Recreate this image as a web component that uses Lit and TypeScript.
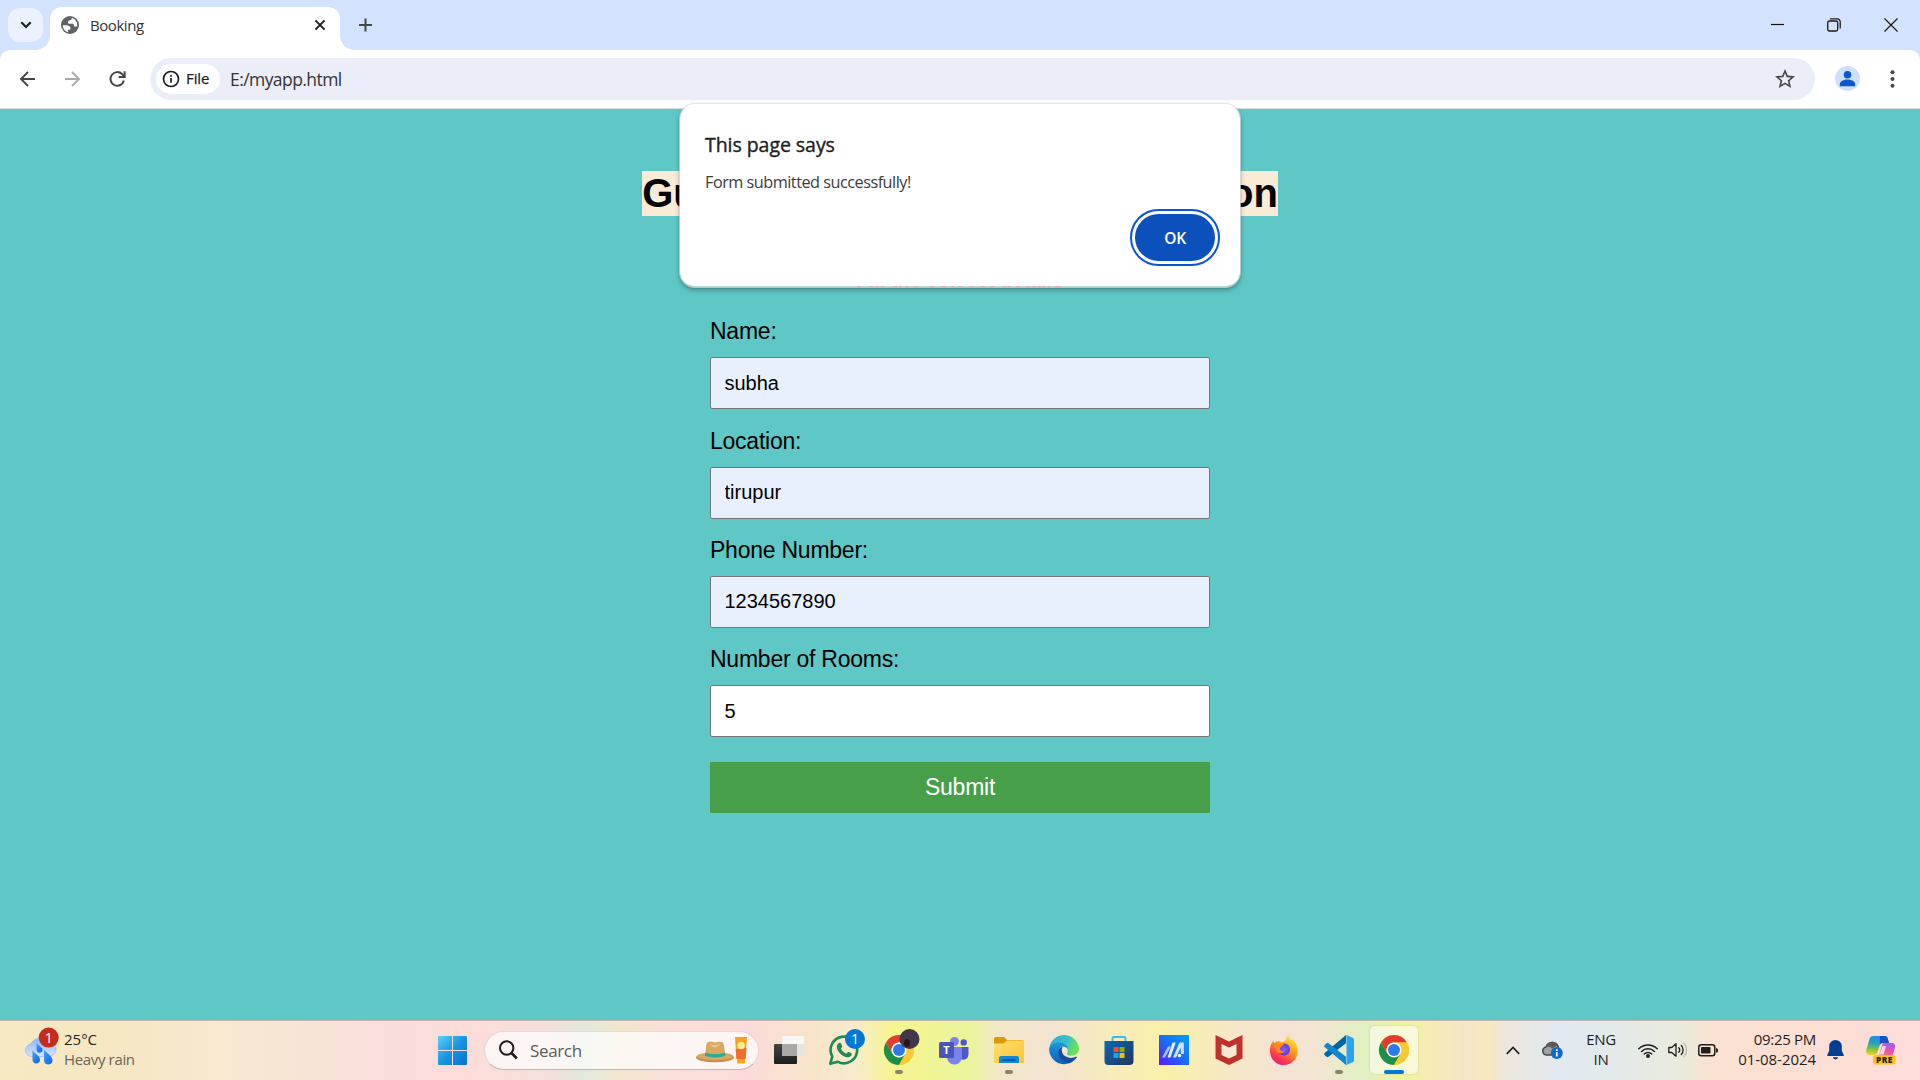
import { LitElement, html, css, svg } from "lit";
import { customElement } from "lit/decorators.js";

interface Field {
  label: string;
  value: string;
  filled: boolean;
}

const FIELDS: Field[] = [
  { label: "Name:", value: "subha", filled: true },
  { label: "Location:", value: "tirupur", filled: true },
  { label: "Phone Number:", value: "1234567890", filled: true },
  { label: "Number of Rooms:", value: "5", filled: false },
];

@customElement("browser-chrome")
class BrowserChrome extends LitElement {
  static styles = css`
    :host {
      display: block;
      background: #d3e3fd;
      font-family: "Open Sans", "Noto Sans", sans-serif;
      color: #1f1f1f;
    }
    svg {
      display: block;
    }
    .tabs {
      display: flex;
      height: 50px;
      box-sizing: border-box;
      padding-left: 8px;
    }
    .tab-search {
      width: 35px;
      height: 34px;
      margin: 8px 7px 0 0;
      border-radius: 12px;
      background: #ebf2fe;
      display: flex;
      align-items: center;
      justify-content: center;
    }
    .tab {
      position: relative;
      display: flex;
      align-items: center;
      width: 290px;
      height: 43px;
      margin: 7px 1px 0 0;
      box-sizing: border-box;
      padding: 0 13px 7px 11px;
      border-radius: 12px 12px 0 0;
      background: #fff;
    }
    .tab::before,
    .tab::after {
      content: "";
      position: absolute;
      bottom: 0;
      width: 14px;
      height: 14px;
    }
    .tab::before {
      left: -14px;
      background: radial-gradient(circle at 0 0, transparent 13.5px, #fff 14px);
    }
    .tab::after {
      right: -14px;
      background: radial-gradient(circle at 100% 0, transparent 13.5px, #fff 14px);
    }
    .tab-title {
      flex: 1;
      margin-left: 11px;
      font-size: 15px;
      line-height: 20px;
      letter-spacing: -0.45px;
      color: #333;
    }
    .plus {
      margin: 18px 0 0 18px;
    }
    .controls {
      margin-left: auto;
      display: flex;
      gap: 43px;
      padding: 18px 22px 0 0;
    }
    .toolbar {
      display: flex;
      align-items: center;
      height: 59px;
      box-sizing: border-box;
      padding: 0 25px 1px 17px;
      border-bottom: 1px solid #dcdfe0;
      border-radius: 10px 10px 0 0;
      background: #fff;
    }
    .nav {
      display: flex;
      gap: 22px;
      width: 133px;
    }
    .omnibox {
      flex: 1;
      display: flex;
      align-items: center;
      height: 42px;
      box-sizing: border-box;
      padding: 0 20px 0 6px;
      border-radius: 21px;
      background: #ebeef8;
    }
    .chip {
      display: flex;
      align-items: center;
      gap: 6px;
      width: 64px;
      height: 30px;
      box-sizing: border-box;
      padding-left: 6px;
      border-radius: 15px;
      background: #fff;
      font-size: 15px;
      font-weight: 500;
      letter-spacing: -0.1px;
    }
    .chip span {
      padding-bottom: 1px;
      -webkit-text-stroke: 0.25px #1f1f1f;
    }
    .url {
      flex: 1;
      margin-left: 10px;
      font-size: 17.5px;
      letter-spacing: -0.57px;
      color: #333;
    }
    .avatar {
      margin: 0 30px 0 20px;
    }
  `;

  render() {
    return html`
      <div class="tabs">
        <div class="tab-search">
          <svg width="12" height="8" viewBox="0 0 12 8" fill="none" stroke="#1f1f1f" stroke-width="2.2">
            <path d="M1.3 1.3 6 6l4.7-4.7" />
          </svg>
        </div>
        <div class="tab">
          <svg width="18" height="18" viewBox="0 0 18 18">
            <circle cx="9" cy="9" r="9" fill="#5f6368" />
            <path
              fill="#fff"
              d="M1.800 9.300h3.400c2.800 0 4.300 1.300 4.300 3.300 0 .8-.6 1.200-1.500 1.200H7v2.400C4 15.500 1.800 12.700 1.800 9.300zM10.800 2c.1 1.200-.6 2-1.800 2.300-1.500.4-2.300 1.300-2 2.500.2.700.8 1 2 1h2.500c.8 0 1.200.4 1.300 1.200.1 1 .7 1.600 1.600 1.600h1.700c-.4 1.800.2-.2.100-1.600C16.200 5.500 13.900 2.700 10.800 2z"
            />
            <path d="M10.500 4.800 13.300 4l2 2.500.4 2.500h-2.200l-1-2.200h-3z" fill="#fff" />
          </svg>
          <span class="tab-title">Booking</span>
          <svg width="14" height="14" viewBox="0 0 14 14" stroke="#1f1f1f" stroke-width="2">
            <path d="M2.400 2.400l9.200 9.200M11.600 2.400 2.400 11.600" />
          </svg>
        </div>
        <svg class="plus" width="13" height="14" viewBox="0 0 13 14" stroke="#454746" stroke-width="2">
          <path d="M0 7h13M6.500 .5v13" />
        </svg>
        <div class="controls">
          <svg width="13" height="14" viewBox="0 0 13 14" stroke="#111" stroke-width="1.200">
            <path d="M0 6.500h13" />
          </svg>
          <svg width="14" height="14" viewBox="0 0 14 14" fill="none" stroke="#1b1b1b" stroke-width="1.300">
            <rect x=".7" y="3" width="10" height="10" rx="1.800" />
            <path d="M3 .8h7.200a3 3 0 0 1 3 3V10.500" />
          </svg>
          <svg width="14" height="14" viewBox="0 0 14 14" stroke="#1b1b1b" stroke-width="1.200">
            <path d="M.5.500l13 13M13.500.500l-13 13" />
          </svg>
        </div>
      </div>
      <div class="toolbar">
        <div class="nav">
          <svg width="22" height="22" viewBox="0 0 22 22" fill="none" stroke="#444746" stroke-width="1.900">
            <path d="M18 11H4.500M11 4l-7 7 7 7" />
          </svg>
          <svg width="22" height="22" viewBox="0 0 22 22" fill="none" stroke="#aaacab" stroke-width="1.900">
            <path d="M4 11h13.500M11 4l7 7-7 7" />
          </svg>
          <svg width="24" height="22" viewBox="0 0 24 22" fill="none" stroke="#444746" stroke-width="2">
            <path d="M18.900 12.500a6.800 6.800 0 1 1-1.700-6.300l2 2.200" />
            <path d="M19.600 3.200v5.800h-5.900" />
          </svg>
        </div>
        <div class="omnibox">
          <div class="chip">
            <svg width="18" height="18" viewBox="0 0 18 18" fill="none" stroke="#1f1f1f" stroke-width="1.700">
              <circle cx="9" cy="9" r="7.500" />
              <path d="M9 8v4.800M9 5v1.800" />
            </svg>
            <span>File</span>
          </div>
          <span class="url">E:/myapp.html</span>
          <svg width="20" height="20" viewBox="2 2 20 20" fill="#444746">
            <path
              d="M22 9.240l-7.190-.62L12 2 9.190 8.630 2 9.240l5.460 4.730L5.820 21 12 17.270 18.180 21l-1.630-7.030L22 9.240zM12 15.400l-3.760 2.270 1-4.280-3.320-2.880 4.380-.38L12 6.100l1.710 4.040 4.380.38-3.320 2.880 1 4.280L12 15.400z"
            />
          </svg>
        </div>
        <svg class="avatar" width="25" height="25" viewBox="0 0 25 25">
          <circle cx="12.500" cy="12.500" r="12.500" fill="#cfe0fc" />
          <circle cx="12.500" cy="8.800" r="3.800" fill="#0b57d0" />
          <path d="M4.800 20.200v-2c0-3 4-4.700 7.700-4.700s7.700 1.700 7.700 4.700v2z" fill="#0b57d0" />
        </svg>
        <svg width="5" height="18" viewBox="0 0 5 18" fill="#444746">
          <circle cx="2.500" cy="2.200" r="2" />
          <circle cx="2.500" cy="9" r="2" />
          <circle cx="2.500" cy="15.800" r="2" />
        </svg>
      </div>
    `;
  }
}

@customElement("booking-page")
class BookingPage extends LitElement {
  static styles = css`
    :host {
      display: flex;
      flex-direction: column;
      align-items: center;
      height: 911px;
      background: #5fc7c6;
      font-family: "Liberation Sans", Arial, sans-serif;
      color: #000;
    }
    h1 {
      width: 636px;
      height: 45px;
      margin: 62px 0 0;
      background: #faebd7;
      font-size: 40px;
      line-height: 45px;
      letter-spacing: -0.02px;
      text-align: center;
      white-space: nowrap;
    }
    h2 {
      margin: 53px 0 0;
      font-size: 20px;
      line-height: 23px;
      color: crimson;
    }
    form {
      display: flex;
      flex-direction: column;
      width: 500px;
      margin-top: 26.2px;
    }
    label {
      font-size: 23px;
      line-height: 26px;
      letter-spacing: -0.24px;
      margin-bottom: 13px;
    }
    .entry {
      height: 52px;
      box-sizing: border-box;
      padding: 0 13.5px;
      margin-bottom: 18.4px;
      border: 1px solid #767676;
      border-radius: 2px;
      background: #fff;
      font: 20px/48px "Liberation Sans", Arial, sans-serif;
      color: #000;
      outline: none;
    }
    .filled {
      background: #e8f0fe;
    }
    button {
      height: 51px;
      margin-top: 6.3px;
      padding: 0;
      border: 0;
      background: #47a049;
      color: #fff;
      font: 23px "Liberation Sans", Arial, sans-serif;
      letter-spacing: -0.24px;
    }
  `;

  render() {
    return html`
      <h1>Guest Room Booking Application</h1>
      <h2>Fill the correct details</h2>
      <form>
        ${FIELDS.map(
          (f) => html`<label>${f.label}</label>
            <input class="entry ${f.filled ? "filled" : ""}" .value=${f.value} />`
        )}
        <button type="button">Submit</button>
      </form>
    `;
  }
}

@customElement("alert-dialog")
class AlertDialog extends LitElement {
  static styles = css`
    :host {
      position: absolute;
      left: 679px;
      top: 103px;
      width: 562px;
      height: 185px;
      box-sizing: border-box;
      padding: 28px 25px 24px 25px;
      display: flex;
      flex-direction: column;
      border: 1px solid rgba(226, 226, 226, 0.7);
      border-bottom-width: 2px;
      border-radius: 16px;
      background: #fff;
      background-clip: padding-box;
      box-shadow: 0 3px 5px rgba(0, 0, 0, 0.2), 0 1px 2px rgba(0, 0, 0, 0.14);
      font-family: "Open Sans", "Noto Sans", sans-serif;
      color: #1f1f1f;
    }
    .title {
      font-size: 19.500px;
      line-height: 26px;
      font-weight: 500;
      letter-spacing: -0.05px;
      -webkit-text-stroke: 0.4px #1f1f1f;
    }
    .message {
      margin-top: 13px;
      font-size: 16.250px;
      line-height: 22px;
      letter-spacing: -0.5px;
      color: #3c3c3c;
    }
    .ok {
      align-self: flex-end;
      margin-top: 21px;
      width: 80px;
      height: 47px;
      border-radius: 24px;
      background: #0c50bc;
      outline: 2px solid #0b57d0;
      outline-offset: 3px;
      color: #fff;
      font-size: 15.500px;
      line-height: 48px;
      font-weight: 600;
      letter-spacing: -0.2px;
      text-align: center;
    }
  `;

  render() {
    return html`
      <div class="title">This page says</div>
      <div class="message">Form submitted successfully!</div>
      <div class="ok">OK</div>
    `;
  }
}

const chromeLogo = svg`
  <circle cx="15" cy="15" r="15" fill="#fbc934" />
  <path d="M2 7.500A15 15 0 0 0 15 30l6.500-11.250L15 15 8.500 18.750z" fill="#1c9048" />
  <path d="M2 7.500A15 15 0 0 1 28 7.500H15A7.500 7.500 0 0 0 8.500 18.750z" fill="#e33b2e" />
  <path d="M28 7.500A15 15 0 0 1 15 30l6.500-11.250A7.500 7.500 0 0 0 15 7.500z" fill="#fbc934" />
  <circle cx="15" cy="15" r="7.500" fill="#fff" />
  <circle cx="15" cy="15" r="6" fill="#3079ea" />`;

const ICONS = {
  taskView: svg`
    <defs><linearGradient id="tv" x1="0" y1="0" x2="0" y2="1"><stop offset="0" stop-color="#454542"/><stop offset="1" stop-color="#1d1d1c"/></linearGradient></defs>
    <rect x="0" y="9" width="23" height="20" rx="1" fill="url(#tv)" />
    <rect x="8" y="1" width="22" height="20" rx="1" fill="#f7f7f5" />
    <path d="M8 9h15v12H9a1 1 0 0 1-1-1z" fill="#a9a8a5" />
    <path d="M23 9h7v11a1 1 0 0 1-1 1h-6z" fill="#e6e5e2" />`,
  whatsapp: svg`
    <path d="M1.300 28.700l2-7.200A13.300 13.300 0 1 1 8.600 26.700z" fill="none" stroke="#1e8a55" stroke-width="2.600" stroke-linejoin="round" />
    <path d="M9.200 8.600c1-1.300 2.300-1.200 2.800-.2l1.200 2.700c.2.600-.2 1.200-1.300 2.500 1.200 2.400 2.800 4 5.300 5.100 1.400-1.700 1.800-2 2.500-1.700l2.700 1.300c.7.500.2 2.200-.6 3-1.800 1.600-4.700 1.200-7.600-.4-3-1.800-5-4.300-6-7-.7-2.200-.2-4 1-5.300z" fill="#1e8a55" />
    <circle cx="26" cy="4" r="10" fill="#0078d4" />
    <text x="26" y="9" text-anchor="middle" font-size="14" fill="#fff">1</text>`,
  chromeProfile: svg`${chromeLogo}
    <circle cx="25.500" cy="4" r="10" fill="#40384a" />
    <ellipse cx="23" cy="8" rx="3" ry="4" fill="#2a1518" />`,
  teams: svg`
    <circle cx="15.500" cy="6.500" r="4.500" fill="#7b83eb" />
    <circle cx="24.700" cy="7.400" r="3.200" fill="#5059c9" />
    <path d="M19 12h10.500v7.500a5 5 0 0 1-7.500 4.500z" fill="#5059c9" />
    <path d="M8 12h15v9a7.500 7.500 0 0 1-15 2z" fill="#7b83eb" />
    <rect x="0" y="7" width="15" height="16" rx="1.500" fill="#4b53bc" />
    <text x="7.500" y="19" text-anchor="middle" font-size="11" font-weight="700" fill="#fff">T</text>`,
  folder: svg`
    <defs><linearGradient id="fo" x1="0" y1="0" x2="1" y2="1"><stop offset="0" stop-color="#ffdf72"/><stop offset="1" stop-color="#fdc22d"/></linearGradient></defs>
    <path d="M0 4a2 2 0 0 1 2-2h8l3 3h15a2 2 0 0 1 2 2v7H0z" fill="#dc9a08" />
    <path d="M0 8.500h9.500L13 5.500h16a1 1 0 0 1 1 1V27a1 1 0 0 1-1 1H1a1 1 0 0 1-1-1z" fill="url(#fo)" />
    <path d="M5 28v-5a2 2 0 0 1 2-2h16a2 2 0 0 1 2 2v5z" fill="#1585d8" />
    <path d="M8.500 25h13" stroke="#0c5594" stroke-width="1.600" />`,
  edge: svg`
    <defs>
      <linearGradient id="ea" x1="0" y1="0" x2="1" y2=".3"><stop offset="0" stop-color="#2aa5e4"/><stop offset=".6" stop-color="#35c3c8"/><stop offset="1" stop-color="#6de05a"/></linearGradient>
      <linearGradient id="eb" x1="0" y1="0" x2="0" y2="1"><stop offset="0" stop-color="#1c97dd"/><stop offset="1" stop-color="#0b5fb8"/></linearGradient>
    </defs>
    <path d="M.3 13A15 15 0 0 1 30 13c.3 5-3 7.600-7.500 7.600-3.500 0-5.300-1.200-4.500-2.600 1.800-2.700.3-6.500-4-6.500C8 9 2 9.500.3 13z" fill="url(#ea)" />
    <path d="M.1 14.500C.5 9.800 5 7.500 9.500 7.500c5 0 9.300 2.500 9.500 6.700-1-2-2.700-3-5-2.700-3.500.5-5 4-4 8 1.200 5 6 8.500 10 8.800A15 15 0 0 1 .1 14.500z" fill="url(#eb)" />
    <path d="M12.500 12c-3 1.500-4 4.600-3 8 1.500 5 6.500 8.800 11 8.200 3.200-1.100 5.500-3.200 7.300-5.700.4-.6-.1-1-.7-.7-5 2.500-12 .5-13.800-4-.8-2.200-.7-4 .2-5.700z" fill="#11509c" />`,
  store: svg`
    <defs><linearGradient id="st" x1="0" y1="0" x2="1" y2="1"><stop offset="0" stop-color="#0c69b4"/><stop offset="1" stop-color="#243459"/></linearGradient></defs>
    <path d="M8.500 7V3.500a1.500 1.500 0 0 1 1.500-1.500h10a1.500 1.500 0 0 1 1.500 1.500V7" fill="none" stroke="#37bdf0" stroke-width="2" />
    <path d="M.5 6h29v20a4 4 0 0 1-4 4h-21a4 4 0 0 1-4-4z" fill="url(#st)" />
    <rect x="9.500" y="12" width="5" height="5" fill="#f25022" /><rect x="15.500" y="12" width="5" height="5" fill="#7fba00" />
    <rect x="9.500" y="18" width="5" height="5" fill="#12a5ee" /><rect x="15.500" y="18" width="5" height="5" fill="#ffb900" />`,
  asus: svg`
    <defs><linearGradient id="as" x1="0" y1="1" x2="1" y2="0"><stop offset="0" stop-color="#5b16ff"/><stop offset=".5" stop-color="#1a6cf8"/><stop offset="1" stop-color="#00a2ff"/></linearGradient></defs>
    <rect width="30" height="30" fill="url(#as)" />
    <path d="M3 22.500 9 11.500h3L6 22.500z" fill="#a9c2ff" />
    <path d="M8.500 22.500 13.500 7.500h3.200L11.500 22.500z" fill="#e4ecff" />
    <path d="M14 22.500 20.500 7.500h4.300v11.500h-3v-6.500L17 22.500z" fill="#d5e2ff" />
    <circle cx="20.500" cy="20.500" r="1.700" fill="#fff" />`,
  mcafee: svg`
    <path d="M1.500 0 15 6.500 28.500 0v23.500L15 30 1.500 23.500z" fill="#c0302c" />
    <path d="M7.500 9 15 12.500 22.500 9v11L15 23.500 7.500 20z" fill="#f6ead2" />`,
  firefox: svg`
    <defs>
      <linearGradient id="fa" x1=".8" y1="0" x2=".2" y2="1"><stop offset="0" stop-color="#fff044"/><stop offset=".4" stop-color="#ff9a1e"/><stop offset=".75" stop-color="#ff3750"/><stop offset="1" stop-color="#e21b85"/></linearGradient>
      <radialGradient id="fb"><stop offset="0" stop-color="#9059ff"/><stop offset="1" stop-color="#5b3bd0"/></radialGradient>
    </defs>
    <path d="M19 .5c1.500 2 2.500 3.500 3.500 5 .5-.5.500-1 .3-1.700C27 7 29 11.500 28.700 16A13.800 13.800 0 0 1 1 16.500C.7 12 2 8.500 4.500 5.500c0 1.200.2 2 .8 2.500 1.200-1.200 3-2 4.500-2 1 .2 2 .8 3 1.500 1.800-.5 3.800-1.500 4.200-3C17.500 3 18 1.500 19 .5z" fill="url(#fa)" />
    <circle cx="15" cy="14.500" r="6" fill="url(#fb)" />
    <path d="M5.500 8.500c4-1.500 7 .5 9.500.3-.3 2-2.500 2-3.500 3.700-1.200 2 .5 4.500 4 3.500-1 3-6 3-8 0C6 13.500 6 11 5.500 8.500z" fill="#ff8a1c" />`,
  vscode: svg`
    <path d="M22 0v8.200L4.600 21.800a1.500 1.500 0 0 1-2 0L.6 20a1.400 1.400 0 0 1 0-2z" fill="#0065a9" />
    <path d="M22 30v-8.200L4.600 8.200a1.500 1.500 0 0 0-2 0L.6 10a1.400 1.400 0 0 0 0 2z" fill="#1287cf" />
    <path d="M22.500 0 29 3a1.700 1.700 0 0 1 1 1.600v20.800a1.700 1.700 0 0 1-1 1.600l-6.500 3c-.6.2-1 0-1.300-.3 1 .4 1.300-.2 1.300-1V1.300c0-.8-.3-1.400-1.300-1 .3-.3.700-.5 1.300-.3z" fill="#2aa4f2" />`,
  chrome: chromeLogo,
};

interface App {
  icon: keyof typeof ICONS;
  state?: "running" | "active";
}

const APPS: App[] = [
  { icon: "taskView" },
  { icon: "whatsapp" },
  { icon: "chromeProfile", state: "running" },
  { icon: "teams" },
  { icon: "folder", state: "running" },
  { icon: "edge" },
  { icon: "store" },
  { icon: "asus" },
  { icon: "mcafee" },
  { icon: "firefox" },
  { icon: "vscode", state: "running" },
  { icon: "chrome", state: "active" },
];

@customElement("task-bar")
class TaskBar extends LitElement {
  static styles = css`
    :host {
      display: flex;
      align-items: center;
      height: 60px;
      box-sizing: border-box;
      padding-bottom: 1px;
      border-top: 1px solid #c5b3b0;
      font-family: "Open Sans", "Noto Sans", sans-serif;
      color: #1f1f1f;
      background: linear-gradient(
        90deg,
        #f7e9c2 0,
        #f5e7c2 110px,
        #f8e9d0 220px,
        #f7e3d8 320px,
        #f9dddb 385px,
        #fcdcd9 470px,
        #f3e0da 550px,
        #e2e8dc 585px,
        #f3e6cf 620px,
        #f9dfd8 670px,
        #fbdbd9 750px,
        #f7e5c8 815px,
        #f8ead0 850px,
        #f6f58e 895px,
        #eaf49c 970px,
        #f2e8c9 1000px,
        #f2e3d2 1050px,
        #f7ecbc 1110px,
        #f9f0a9 1165px,
        #f6e8c6 1230px,
        #f4e2d4 1285px,
        #f0e6d0 1325px,
        #dff0c0 1365px,
        #eff3a0 1400px,
        #f6ecb4 1430px,
        #f4e5c8 1470px,
        #f9e8c0 1490px,
        #ebe7dc 1505px,
        #e2e9f2 1560px,
        #e3eae8 1620px,
        #e9ebdc 1680px,
        #fae1d2 1712px,
        #fbdfd2 1800px,
        #fddcd9 1920px
      );
    }
    svg {
      display: block;
      overflow: visible;
    }
    .weather {
      display: flex;
      width: 399px;
      padding-left: 25px;
      gap: 9px;
      align-items: center;
    }
    .two {
      font-size: 15px;
      line-height: 20px;
      padding-bottom: 2px;
      white-space: nowrap;
    }
    .muted {
      color: #69655b;
      letter-spacing: -0.35px;
    }
    .start {
      width: 56px;
      padding-left: 14px;
      box-sizing: border-box;
      margin-right: 4px;
    }
    .search {
      display: flex;
      align-items: center;
      width: 275px;
      height: 39px;
      box-sizing: border-box;
      padding: 0 11px 0 14px;
      border: 1px solid #ecd5d2;
      border-bottom-color: #c8b5b2;
      border-radius: 20px;
      background: rgba(255, 255, 255, 0.7);
      font-size: 17px;
      color: #5d5b5b;
    }
    .query {
      flex: 1;
      margin-left: 12px;
      letter-spacing: -0.35px;
    }
    .apps {
      display: flex;
      gap: 7px;
      margin-left: 6px;
    }
    .app {
      display: flex;
      flex-direction: column;
      align-items: center;
      width: 48px;
      height: 48px;
      box-sizing: border-box;
      padding-top: 9px;
      border-radius: 5px;
    }
    .app.active {
      background: rgba(255, 255, 255, 0.55);
      box-shadow: 0 0 1px 1px rgba(190, 180, 130, 0.2);
    }
    .app.running::after,
    .app.active::after {
      content: "";
      width: 8px;
      height: 4px;
      margin-top: 5px;
      border-radius: 2px;
      background: #89856c;
    }
    .app.active::after {
      width: 20px;
      background: #0078d4;
    }
    .tray {
      display: flex;
      align-items: center;
      margin-left: auto;
      padding-right: 24px;
    }
    .onedrive {
      margin-left: 22px;
    }
    .lang {
      width: 40px;
      margin: 0 17px 0 18px;
      text-align: center;
      letter-spacing: -0.3px;
    }
    .status {
      display: flex;
      align-items: center;
      gap: 10px;
    }
    .clock {
      width: 90px;
      margin-left: 8px;
      text-align: right;
      letter-spacing: -0.05px;
    }
    .time {
      letter-spacing: -0.3px;
    }
    .bell {
      margin: 0 22px 0 11px;
    }
  `;

  render() {
    return html`
      <div class="weather">
        <svg width="30" height="30" viewBox="0 0 30 30">
          <defs>
            <linearGradient id="cl" x1="0" y1="0" x2="0" y2="1"><stop offset="0" stop-color="#8db8f8" /><stop offset="1" stop-color="#d7e2f6" /></linearGradient>
            <linearGradient id="dr" x1="0" y1="0" x2="1" y2="1"><stop offset="0" stop-color="#4aa0fa" /><stop offset="1" stop-color="#0a62ea" /></linearGradient>
          </defs>
          <path d="M6.500 21.500a6.300 6.300 0 0 1-.8-12.500A10 10 0 0 1 22 6.500a7.600 7.600 0 0 1 3 15z" fill="url(#cl)" stroke="#9dbcf0" stroke-width=".8" />
          <path d="M7.500 15.500c3 3.500 7.500 5.500 7.500 9.200 0 5-7.500 5-7.500 0z" fill="url(#dr)" />
          <path d="M19 15c3.500 3.500 8.500 6.500 8.500 10.500 0 5.300-8.500 5.300-8.500 0z" fill="url(#dr)" />
          <path d="M11.500 8c2 2.500 6 4.300 6 6.700 0 4-6 4-6 0z" fill="url(#dr)" />
          <circle cx="23.700" cy="2.600" r="10" fill="#c42b1c" />
          <text x="23.700" y="7.600" text-anchor="middle" font-size="14" fill="#fff">1</text>
        </svg>
        <div class="two">
          <div>25°C</div>
          <div class="muted">Heavy rain</div>
        </div>
      </div>
      <div class="start">
        <svg width="29" height="29" viewBox="0 0 29 29">
          <defs>
            <linearGradient id="w" gradientUnits="userSpaceOnUse" x1="0" y1="0" x2="29" y2="29"><stop offset="0" stop-color="#54d0fb" /><stop offset=".5" stop-color="#1a95e2" /><stop offset="1" stop-color="#0670d0" /></linearGradient>
          </defs>
          <path d="M0 1a1 1 0 0 1 1-1h13v14H0zM15 0h13a1 1 0 0 1 1 1v13H15zM0 15h14v14H1a1 1 0 0 1-1-1zM15 15h14v13a1 1 0 0 1-1 1H15z" fill="url(#w)" />
        </svg>
      </div>
      <div class="search">
        <svg width="19" height="20" viewBox="0 0 19 20" fill="none" stroke="#1f1f1f">
          <circle cx="7.700" cy="8" r="6.700" stroke-width="2" />
          <path d="M12.500 13l5.300 5.500" stroke-width="2.600" />
        </svg>
        <span class="query">Search</span>
        <svg width="51" height="27" viewBox="0 0 51 27">
          <ellipse cx="19" cy="20.500" rx="19" ry="4.800" fill="#c68f4e" />
          <ellipse cx="19" cy="19.300" rx="18" ry="3.800" fill="#daa765" />
          <path d="M9 20 10.200 8c.4-3 3.300-4 5.800-3.200 2 .8 4.500.8 6.500 0 3-.6 5 .6 5.500 3.200L29.500 20c-5 2.500-15.500 2.500-20.500 0z" fill="#d9a964" />
          <path d="M14 6c2 3 8 3 10 0-1 5-8 6-10 0z" fill="#f0cb91" />
          <path d="M9 17.500l.3-1.900c5 2 14.600 2 19.500 0l.4 1.900v1.300c-5 2.200-15 2.200-20.200 0z" fill="#2bab94" />
          <path d="M39 0h12l-1.500 22h-9z" fill="#f9a01f" />
          <path d="M39.700 12 50.400 11 49.500 22h-9z" fill="#f36b2c" />
          <circle cx="45" cy="8.500" r="3.800" fill="#ffeb8f" />
          <rect x="41" y="22" width="8" height="4.500" rx="1" fill="#f5a81d" />
        </svg>
      </div>
      <div class="apps">
        ${APPS.map(
          (a) => html`<div class="app ${a.state ?? ""}">
            <svg width="30" height="30" viewBox="0 0 30 30">${ICONS[a.icon]}</svg>
          </div>`
        )}
      </div>
      <div class="tray">
        <svg width="14" height="9" viewBox="0 0 14 9" fill="none" stroke="#1f1f1f" stroke-width="1.700">
          <path d="M.8 7.800 7 1.500l6.200 6.300" />
        </svg>
        <svg class="onedrive" width="21" height="18" viewBox="0 0 21 18">
          <path d="M4.500 14a4 4 0 0 1-.5-7.900A6.500 6.500 0 0 1 16 5l1 4-7 5z" fill="#a3a3a3" stroke="#444" stroke-width="1.500" />
          <path d="M4 6.200C6 5 9 6 10 7.500l5.500-3A6 6 0 0 0 4 6.200z" fill="#5b5b5b" />
          <circle cx="14.800" cy="12" r="6" fill="#0b6ccb" />
          <path d="M14.800 11.300v4.200M14.800 8.300v1.700" stroke="#fff" stroke-width="1.700" />
        </svg>
        <div class="two lang">
          <div>ENG</div>
          <div>IN</div>
        </div>
        <div class="status">
          <svg width="20" height="15" viewBox="0 0 20 15" fill="none" stroke="#1f1f1f" stroke-width="1.500" stroke-linecap="round">
            <path d="M.8 5.800a13 13 0 0 1 18.400 0M3.600 8.500a9 9 0 0 1 12.800 0M6.300 11a5.200 5.200 0 0 1 7.400 0" />
            <circle cx="10" cy="13" r="1.200" fill="#1f1f1f" />
          </svg>
          <svg width="20" height="16" viewBox="0 0 20 16" fill="none" stroke="#1f1f1f" stroke-width="1.300" stroke-linecap="round">
            <path d="M.8 5.500h3L8 1.800v12.400L3.800 10.500h-3z" stroke-linejoin="round" />
            <path d="M10.800 5.700a3.500 3.500 0 0 1 0 4.600M13.300 3.500a6.500 6.500 0 0 1 0 9" />
            <path d="M16 1.300a10 10 0 0 1 0 13.400" stroke="#b9bcb5" />
          </svg>
          <svg width="20" height="13" viewBox="0 0 20 13">
            <rect x=".8" y=".8" width="16" height="11" rx="2.500" fill="none" stroke="#1f1f1f" stroke-width="1.500" />
            <rect x="3" y="3" width="9.500" height="6.600" rx=".8" fill="#1f1f1f" />
            <path d="M18 4.300h.6c.8 0 1.400.7 1.400 2.100s-.6 2.100-1.400 2.100H18z" fill="#1f1f1f" />
          </svg>
        </div>
        <div class="two clock">
          <div class="time">09:25 PM</div>
          <div>01-08-2024</div>
        </div>
        <svg class="bell" width="17" height="20" viewBox="0 0 17 20" fill="#003e92">
          <path d="M8.500 0a6.300 6.300 0 0 1 6.300 6.300v4.500l1.900 4c.3.700-.1 1.300-.8 1.300H1.100c-.7 0-1.100-.6-.8-1.300l1.900-4V6.300A6.300 6.300 0 0 1 8.500 0zM5.700 17.300h5.600a2.900 2.900 0 0 1-5.600 0z" />
        </svg>
        <svg width="30" height="29" viewBox="0 0 30 29">
          <defs>
            <linearGradient id="ca" x1=".4" y1="0" x2=".3" y2="1"><stop offset="0" stop-color="#1c8cf0" /><stop offset=".4" stop-color="#26a3b8" /><stop offset=".65" stop-color="#75bf4a" /><stop offset="1" stop-color="#f5d22c" /></linearGradient>
            <linearGradient id="cb" x1=".8" y1="0" x2=".2" y2="1"><stop offset="0" stop-color="#a45cf2" /><stop offset=".5" stop-color="#e653b4" /><stop offset="1" stop-color="#fb8a5b" /></linearGradient>
          </defs>
          <path d="M7.500 0H19c1.500 0 2.200 1 2.700 2.500L23 7h-6c-2 0-3 1-3.500 3L11.500 16c-.6 1.800-1.500 3-3.500 3H4c-3 0-4.500-2-3.700-5L3.500 3C4 1.200 5.500 0 7.500 0z" fill="url(#ca)" />
          <path d="M14 0h5c1.500 0 2.200 1 2.700 2.500L23 7h-6c-1.500 0-2.700.8-3.200 2z" fill="#1c4fc4" />
          <path d="M18 7h8c2.500 0 3.700 2 3 4.500L27 18.500c-.5 1.800-1.500 2.500-3 2.500H10c2-.3 3-1.500 3.500-3L16 9.500C16.300 8 17 7 18 7z" fill="url(#cb)" />
          <path d="M16.500 10h3.500l-2.500 8.500h-4z" fill="#fff" opacity=".75" />
          <rect x="7" y="19" width="22.500" height="9.500" rx="3" fill="#fdc30f" />
          <text x="18.300" y="26.800" text-anchor="middle" font-size="8.300" font-weight="800" letter-spacing=".4" fill="#1f1f1f">PRE</text>
        </svg>
      </div>
    `;
  }
}

@customElement("app-root")
class AppRoot extends LitElement {
  static styles = css`
    :host {
      position: relative;
      display: flex;
      flex-direction: column;
      width: 1920px;
      height: 1080px;
      overflow: hidden;
    }
  `;

  render() {
    return html`
      <browser-chrome></browser-chrome>
      <booking-page></booking-page>
      <task-bar></task-bar>
      <alert-dialog></alert-dialog>
    `;
  }
}
